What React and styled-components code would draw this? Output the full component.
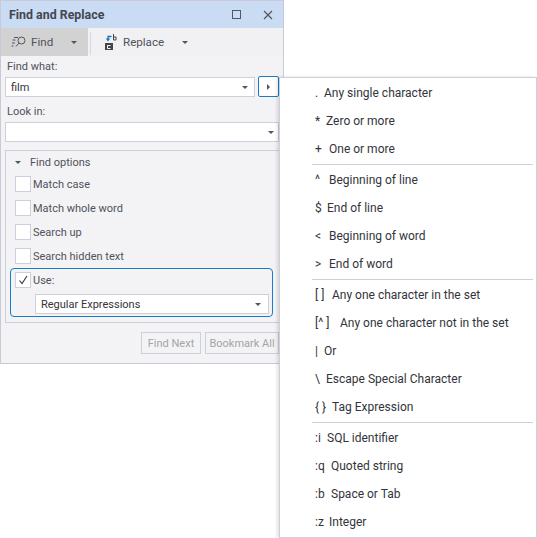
import React from "react";
import styled, { createGlobalStyle } from "styled-components";

const Global = createGlobalStyle`
  html, body { margin: 0; padding: 0; background: #fff; }
  body { width: 537px; height: 538px; overflow: hidden; font-family: Roboto, "Open Sans", sans-serif; font-size: 11px; color: #50525b; }
`;
const Page = styled.div`
  position: relative; width: 537px; height: 538px;
`;
const Panel = styled.div`
  width: 284px; height: 364px; box-sizing: border-box; background: #f3f3f5;
  border: 1px solid #c9c9da;
  display: flex; flex-direction: column;
`;
const TitleBar = styled.div`
  height: 27px; background: #c9dcf3; display: flex; align-items: center; padding: 0 10px 0 8px; flex: none;
`;
const Title = styled.div`font-weight: 700; font-size: 12.4px; color: #44474f; flex: 1;`;
const WinBtn = styled.span`display: inline-flex; margin-left: ${p => p.$ml || 0}px;`;
const Tabs = styled.div`height: 28px; display: flex; align-items: stretch; flex: none; background: #f1f1f4;`;
const Tab = styled.div`
  width: ${p => p.$w}px; box-sizing: border-box; display: flex; align-items: center; background: ${p => p.$active ? "#d2d2d2" : "transparent"};
  padding-left: ${p => p.$pl}px; font-size: 11.6px; color: #50525b;
`;
const TabLabel = styled.span`width: ${p => p.$w}px; margin-left: ${p => p.$ml}px;`;
const Sep = styled.div`width: 1px; background: #d9d9df; margin: 4px 6px 1px 2px;`;
const Body = styled.div`flex: 1; display: flex; flex-direction: column; padding: 0 4px;`;
const Label = styled.div`height: 16px; line-height: 16px; margin-left: 2px; margin-top: ${p => p.$mt}px;`;
const Row = styled.div`display: flex; margin-top: 2px; gap: 3px;`;
const Combo = styled.div`
  box-sizing: border-box; height: 20px; width: ${p => p.$w}px; background: #fff; border: 1px solid #cfcfdc; display: flex; align-items: center;
  padding: 0 4px 0 5px; color: #33343a; justify-content: space-between; margin-top: ${p => p.$mt || 0}px; margin-left: ${p => p.$ml || 0}px;
`;
const Caret = styled.span`flex: none; width: 0; height: 0; border-left: 3.5px solid transparent; border-right: 3.5px solid transparent; border-top: 3.5px solid #55555b; margin-right: ${p => p.$mr ?? 0}px; margin-left: ${p => p.$ml ?? 0}px;`;
const ArrowBtn = styled.div`
  box-sizing: border-box; width: 21px; height: 21px; background: #fff; border: 1px solid #1a7cc4; border-radius: 2px; display: flex; align-items: center; justify-content: center; margin-top: -1px;
`;
const RightTri = styled.span`width: 0; height: 0; border-top: 3.5px solid transparent; border-bottom: 3.5px solid transparent; border-left: 3.5px solid #55555b;`;
const Group = styled.div`
  box-sizing: border-box; margin-top: 8px; width: 275px; height: 173px; border: 1px solid #cfcfdc; padding: 0 0 0 4px;
`;
const GroupHead = styled.div`height: 22px; display: flex; align-items: center; padding-left: 3px; gap: 9px;`;
const Check = styled.div`display: flex; align-items: center; height: 16px; margin-top: ${p => p.$mt ?? 8}px; gap: 2px; margin-left: ${p => p.$ml ?? 5}px;`;
const Box = styled.span`
  box-sizing: border-box; width: 16px; height: 16px; background: #fff; border: 1px solid #cfcfdc; display: inline-flex; align-items: center; justify-content: center; flex: none;
`;
const Focus = styled.div`
  box-sizing: border-box; width: 263px; height: 49px; border: 1px solid #1a7cc4; border-radius: 4px; margin-top: 4px; padding-top: 3px;
`;
const Actions = styled.div`display: flex; justify-content: flex-end; gap: 4px; margin: 9px 0 0 0;`;
const Btn = styled.div`
  box-sizing: border-box; height: 22px; width: ${p => p.$w}px; border: 1px solid #cfcfdc; display: flex; align-items: center; justify-content: center; color: #a3a3a8; background: #f3f3f5;
`;
const Menu = styled.div`
  position: absolute; left: 279px; top: 77px; width: 258px; height: 461px; box-sizing: border-box; background: #fff; border: 1px solid #cfcfdc; box-shadow: -2px 0 3px rgba(0,0,0,.12); padding-top: 1px;
`;
const Item = styled.div`height: 28px; display: flex; align-items: center; padding-left: 35px; font-size: 12px; color: #33343a; white-space: pre;`;
const Sym = styled.span`width: ${p => p.$w}px; flex: none;`;
const Divider = styled.div`height: 1px; background: #cfcfdc; margin: 1px 3px 1px 32px;`;

const groups = [
  [[".", "Any single character", 9], ["*", "Zero or more", 11], ["+", "One or more", 14]],
  [["^", "Beginning of line", 14], ["$", "End of line", 12], ["<", "Beginning of word", 14], [">", "End of word", 14]],
  [["[ ]", "Any one character in the set", 17], ["[^ ]", "Any one character not in the set", 25], ["|", "Or", 9], ["\\", "Escape Special Character", 11], ["{ }", "Tag Expression", 17]],
  [[":i", "SQL identifier", 12], [":q", "Quoted string", 16], [":b", "Space or Tab", 16], [":z", "Integer", 14]],
];

export default function App() {
  return (
    <Page>
      <Global />
      <Panel>
        <TitleBar>
          <Title>Find and Replace</Title>
          <WinBtn><svg width="10" height="10"><rect x=".5" y=".5" width="8" height="8" fill="none" stroke="#55565e"/></svg></WinBtn>
          <WinBtn $ml={21}><svg width="10" height="10"><path d="M1 1l8 8M9 1l-8 8" stroke="#55565e" strokeWidth="1.2"/></svg></WinBtn>
        </TitleBar>
        <Tabs>
          <Tab $w={87} $active $pl={10}>
            <svg width="16" height="14" viewBox="0 0 16 14" fill="none" stroke="#55565e"><circle cx="10.500" cy="5.500" r="3.500"/><path d="M8 8l-3 3.500M3 2.500h4M1.500 5h3M1 8h3M.5 11h2"/></svg>
            <TabLabel $ml={4} $w={40}>Find</TabLabel>
            <Caret />
          </Tab>
          <Sep />
          <Tab $w={100} $pl={8}>
            <svg width="14" height="17" viewBox="0 0 14 17"><rect x="0" y="9" width="8" height="7" fill="#44454c"/><path d="M5.500 11.500h-3v3h3" stroke="#fff" fill="none"/><path d="M3 6V2.500h3.500" fill="none" stroke="#1a72c0" strokeWidth="1.300"/><path d="M.8 4.500l2.200 3 2.200-3z" fill="#1a72c0"/><path d="M8.500 0v6M8.500 3h2.500v3h-2.500" fill="none" stroke="#44454c"/></svg>
            <TabLabel $ml={4} $w={59}>Replace</TabLabel>
            <Caret />
          </Tab>
        </Tabs>
        <Body>
          <Label $mt={3}>Find what:</Label>
          <Row>
            <Combo $w={250}>film<Caret $mr={2} /></Combo>
            <ArrowBtn><RightTri /></ArrowBtn>
          </Row>
          <Label $mt={7}>Look in:</Label>
          <Combo $w={274} $mt={2}><span /><Caret /></Combo>
          <Group>
            <GroupHead><Caret $ml={2} />Find options</GroupHead>
            <Check $mt={3}><Box />Match case</Check>
            <Check><Box />Match whole word</Check>
            <Check><Box />Search up</Check>
            <Check><Box />Search hidden text</Check>
            <Focus>
              <Check $mt={0} $ml={4}><Box><svg width="12" height="12"><path d="M2.500 6.500l2.500 3L10 2" fill="none" stroke="#33343a" strokeWidth="1.100"/></svg></Box>Use:</Check>
              <Combo $w={234} $mt={6} $ml={24}>Regular Expressions<Caret $mr={3} /></Combo>
            </Focus>
          </Group>
          <Actions>
            <Btn $w={60}>Find Next</Btn>
            <Btn $w={74}>Bookmark All</Btn>
          </Actions>
        </Body>
      </Panel>
      <Menu>
        {groups.map((g, i) => (
          <React.Fragment key={i}>
            {i > 0 && <Divider />}
            {g.map(([s, t, w]) => <Item key={t}><Sym $w={w}>{s}</Sym>{t}</Item>)}
          </React.Fragment>
        ))}
      </Menu>
    </Page>
  );
}
